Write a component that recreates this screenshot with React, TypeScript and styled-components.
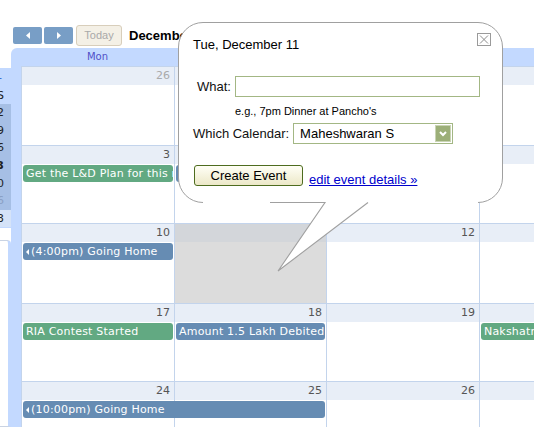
import React from 'react';
import styled, { createGlobalStyle, css } from 'styled-components';

const GlobalStyle = createGlobalStyle`
  html, body {
    margin: 0;
    padding: 0;
    background: #fff;
    overflow: hidden;
  }
  body {
    font-family: 'Liberation Sans', Arial, sans-serif;
  }
`;

const LINE = '#c3d4ec';
const HEAD_BG = '#e8eef7';
const COLS = '153px 152px 153px 152px 153px 152px 152px';
const CAL_FONT = "'DejaVu Sans', Verdana, sans-serif";

const Page = styled.div`
  position: relative;
  width: 534px;
  height: 427px;
  overflow: hidden;
`;

/* ***** toolbar */
const Toolbar = styled.div`
  display: flex;
  align-items: center;
  height: 23px;
  padding: 24px 0 1px 13px;
`;

const NavGroup = styled.div`
  display: flex;
  gap: 2px;
`;

const NavButton = styled.div`
  display: flex;
  align-items: center;
  justify-content: center;
  width: 29px;
  height: 17px;
  border-radius: 2px;
  background: #789ec6;
`;

const TodayButton = styled.div`
  box-sizing: border-box;
  width: 46px;
  height: 21px;
  margin-left: 3px;
  border: 1px solid #d8cebb;
  border-radius: 3px;
  background: #f4f0e6;
  color: #a9a9a9;
  font-size: 11px;
  line-height: 19px;
  text-align: center;
`;

const MonthTitle = styled.div`
  margin-left: 7px;
  font-size: 13px;
  font-weight: bold;
  color: #000;
  white-space: nowrap;
`;

/* ***** side strip */
const Main = styled.div`
  display: flex;
  height: 379px;
`;

const SideStrip = styled.div`
  display: flex;
  flex-direction: column;
  flex-shrink: 0;
  width: 11px;
  padding-top: 20px;
`;

const MiniCal = styled.div`
  display: flex;
  flex-direction: column;
  height: 160px;
  overflow: hidden;
  background: #c3d9ff;
  font-family: ${CAL_FONT};
  font-size: 11px;
`;

interface IMiniRowProps {
  shade?: 'dark' | 'light';
  bold?: boolean;
  faint?: boolean;
}

const MiniRow = styled.div<IMiniRowProps>`
  ${({ shade, bold, faint }) => css`
    display: flex;
    justify-content: flex-end;
    align-items: center;
    height: ${shade ? '17.6px' : '18px'};
    padding-right: 7px;
    white-space: nowrap;
    color: ${faint ? '#8aa0c4' : '#222'};
    font-weight: ${bold ? 'bold' : 'normal'};
    background: ${shade === 'dark' ? '#a6bfe5' : shade === 'light' ? '#d5e3f8' : 'transparent'};
  `}
`;

const MiniSign = styled(MiniRow)`
  color: #3366cc;
  padding-right: 9px;
`;

const SideBox = styled.div`
  flex: 1;
  margin-top: 12px;
  border: 1px solid #c9d3e3;
  border-left: none;
  border-right: 3px solid #c3d9ff;
  border-radius: 0 4px 0 0;
  background: #fff;
`;

/* ***** calendar */
const CalendarFrame = styled.div`
  flex: 1;
  min-width: 0;
  padding-left: 10px;
  overflow: hidden;
  border-top-left-radius: 6px;
  background: #c3d9ff;
  font-family: ${CAL_FONT};
`;

const DayNames = styled.div`
  display: grid;
  grid-template-columns: ${COLS};
  height: 18px;
`;

const DayName = styled.div`
  font-size: 10px;
  line-height: 18px;
  text-align: center;
  color: #5050c8;
`;

const MonthGrid = styled.div`
  background: #fff;
`;

interface IWeekProps {
  height: number;
}

const Week = styled.div<IWeekProps>`
  display: grid;
  grid-template-columns: ${COLS};
  grid-template-rows: 18px 18px 1fr;
  height: ${({ height }) => height}px;
  box-sizing: border-box;
  border-top: 1px solid ${LINE};
`;

interface IDayCellProps {
  col: number;
  selected?: boolean;
}

const DayCell = styled.div<IDayCellProps>`
  ${({ col, selected }) => css`
    grid-row: 1 / -1;
    grid-column: ${col};
    border-left: 1px solid ${LINE};
    background: ${selected
      ? 'linear-gradient(to bottom, #d3d6da 0 18px, #dcdcdc 18px)'
      : `linear-gradient(to bottom, ${HEAD_BG} 0 18px, #fff 18px)`};
  `}
`;

interface IDayNumProps {
  col: number;
  other?: boolean;
}

const DayNum = styled.div<IDayNumProps>`
  grid-row: 1;
  grid-column: ${({ col }) => col};
  padding-right: 4px;
  font-size: 11px;
  line-height: 18px;
  text-align: right;
  color: ${({ other }) => (other ? '#aaa' : '#555')};
`;

interface IEventProps {
  col: number;
  span?: number;
  tone: 'green' | 'blue';
}

const EventBar = styled.div<IEventProps>`
  ${({ col, span = 1, tone }) => css`
    grid-row: 2;
    grid-column: ${col} / span ${span};
    display: flex;
    align-items: center;
    height: 17px;
    margin: 1px 1px 0 2px;
    padding-left: 3px;
    overflow: hidden;
    border-radius: 3px;
    background: ${tone === 'green' ? '#62a982' : '#668cb3'};
    color: #fff;
    font-size: 11px;
    letter-spacing: 0.2px;
    white-space: nowrap;
  `}
`;

const ContinueArrow = styled.svg`
  flex-shrink: 0;
  margin-right: 2px;
`;

/* ***** popup bubble */
const Popup = styled.div`
  position: absolute;
  top: 22px;
  left: 178px;
  box-sizing: border-box;
  width: 325px;
  height: 181px;
  padding: 14px 11px 0 14px;
  border: 1px solid #a0a0a0;
  border-radius: 25px;
  background: #fff;
  font-size: 13px;
  color: #000;
`;

const PopupHead = styled.div`
  display: flex;
  justify-content: space-between;
  align-items: flex-start;
  line-height: 15px;
`;

const CloseBox = styled.div`
  display: flex;
  align-items: center;
  justify-content: center;
  box-sizing: border-box;
  width: 14px;
  height: 13px;
  margin-top: -4px;
  border: 1px solid #9a9a9a;
`;

const FieldRow = styled.div<{ indent: number; top: number }>`
  display: flex;
  align-items: center;
  gap: 4px;
  margin-top: ${({ top }) => top}px;
  padding-left: ${({ indent }) => indent}px;
  color: #111;
`;

const TextInput = styled.div`
  box-sizing: border-box;
  width: 245px;
  height: 21px;
  border: 1px solid #a3b784;
  background: #fff;
`;

const Hint = styled.div`
  margin-top: 8px;
  padding-left: 42px;
  font-size: 11px;
  line-height: 13px;
  color: #000;
`;

const SelectBox = styled.div`
  display: flex;
  align-items: center;
  box-sizing: border-box;
  width: 160px;
  height: 21px;
  padding: 0 1px 0 6px;
  border: 1px solid #a3b784;
  color: #000;
`;

const DropButton = styled.div`
  display: flex;
  align-items: center;
  justify-content: center;
  box-sizing: border-box;
  width: 16px;
  height: 17px;
  margin-left: auto;
  border: 1px solid #c9d4b4;
  background: #9caf78;
`;

const Actions = styled.div`
  display: flex;
  align-items: flex-end;
  gap: 6px;
  margin-top: 21px;
  padding-left: 1px;
`;

const CreateButton = styled.div`
  box-sizing: border-box;
  width: 109px;
  height: 21px;
  border: 1px solid #4e6c1f;
  border-radius: 3px;
  background: linear-gradient(to bottom, #fffff6, #ece8c8);
  font-size: 13px;
  line-height: 19px;
  text-align: center;
  color: #000;
`;

const EditLink = styled.a`
  font-size: 13px;
  line-height: 15px;
  color: #0000cc;
  text-decoration: underline;
  margin-bottom: -1px;
`;

/* bottom edge of the bubble with its pointer (edge pieces only drawn near the pointer) */
const BubbleBottom = styled.svg`
  position: absolute;
  left: 24px;
  top: 178px;
  overflow: visible;
`;

const days = ['Mon', 'Tue', 'Wed', 'Thu', 'Fri', 'Sat', 'Sun'];

interface IEvent {
  col: number;
  span?: number;
  tone: 'green' | 'blue';
  text: string;
  continued?: boolean;
}

interface IWeek {
  height: number;
  days: { n: number; other?: boolean }[];
  selected?: number;
  events: IEvent[];
}

const mk = (start: number, otherUntil = 0) =>
  Array.from({ length: 7 }, (_, i) => {
    const raw = start + i;
    if (otherUntil && raw <= otherUntil) return { n: raw, other: true };
    if (otherUntil) return { n: raw - otherUntil };
    return { n: raw > 31 ? raw - 31 : raw, other: raw > 31 };
  });

const weeks: IWeek[] = [
  { height: 79, days: mk(26, 30), events: [] },
  {
    height: 78,
    days: mk(3),
    events: [
      { col: 1, tone: 'green', text: 'Get the L&D Plan for this month' },
      { col: 2, tone: 'blue', text: '' },
    ],
  },
  {
    height: 80,
    days: mk(10),
    selected: 2,
    events: [{ col: 1, tone: 'blue', text: '(4:00pm) Going Home', continued: true }],
  },
  {
    height: 78,
    days: mk(17),
    events: [
      { col: 1, tone: 'green', text: 'RIA Contest Started' },
      { col: 2, tone: 'blue', text: 'Amount 1.5 Lakh Debited' },
      { col: 4, tone: 'green', text: 'Nakshatra Visit' },
    ],
  },
  {
    height: 80,
    days: mk(24),
    events: [
      { col: 1, span: 2, tone: 'blue', text: '(10:00pm) Going Home', continued: true },
    ],
  },
];

const ArrowLeft = () => (
  <svg width="4" height="7" viewBox="0 0 4 7">
    <polygon points="4,0 0,3.5 4,7" fill="#fff" />
  </svg>
);

const ArrowRight = () => (
  <svg width="4" height="7" viewBox="0 0 4 7">
    <polygon points="0,0 4,3.5 0,7" fill="#fff" />
  </svg>
);

export default function App() {
  return (
    <Page>
      <GlobalStyle />
      <Toolbar>
        <NavGroup>
          <NavButton>
            <ArrowLeft />
          </NavButton>
          <NavButton>
            <ArrowRight />
          </NavButton>
        </NavGroup>
        <TodayButton>Today</TodayButton>
        <MonthTitle>December 2007</MonthTitle>
      </Toolbar>

      <Main>
        <SideStrip>
          <MiniCal>
            <MiniSign>-</MiniSign>
            <MiniRow>S</MiniRow>
            <MiniRow shade="dark">2</MiniRow>
            <MiniRow shade="dark">9</MiniRow>
            <MiniRow shade="dark">16</MiniRow>
            <MiniRow shade="dark" bold>23</MiniRow>
            <MiniRow shade="dark">30</MiniRow>
            <MiniRow shade="dark" faint>6</MiniRow>
            <MiniRow shade="light">13</MiniRow>
          </MiniCal>
          <SideBox />
        </SideStrip>

        <CalendarFrame>
          <DayNames>
            {days.map((d) => (
              <DayName key={d}>{d}</DayName>
            ))}
          </DayNames>
          <MonthGrid>
            {weeks.map((w, wi) => (
              <Week key={wi} height={w.height}>
                {w.days.map((d, i) => (
                  <DayCell key={`c${i}`} col={i + 1} selected={w.selected === i + 1} />
                ))}
                {w.days.map((d, i) => (
                  <DayNum key={`n${i}`} col={i + 1} other={d.other}>
                    {d.n}
                  </DayNum>
                ))}
                {w.events.map((e, ei) => (
                  <EventBar key={`e${ei}`} col={e.col} span={e.span} tone={e.tone}>
                    {e.continued && (
                      <ContinueArrow width="3" height="6" viewBox="0 0 3 6">
                        <polygon points="3,0 0,3 3,6" fill="#fff" />
                      </ContinueArrow>
                    )}
                    {e.text}
                  </EventBar>
                ))}
              </Week>
            ))}
          </MonthGrid>
        </CalendarFrame>
      </Main>

      <Popup>
        <PopupHead>
          <span>Tue, December 11</span>
          <CloseBox>
            <svg width="10" height="9" viewBox="0 0 10 9">
              <path d="M1 0.5 L9 8.5 M9 0.5 L1 8.5" stroke="#8c8c8c" strokeWidth="1" />
            </svg>
          </CloseBox>
        </PopupHead>
        <FieldRow indent={4} top={24}>
          <span>What:</span>
          <TextInput />
        </FieldRow>
        <Hint>e.g., 7pm Dinner at Pancho's</Hint>
        <FieldRow indent={0} top={5}>
          <span>Which Calendar:</span>
          <SelectBox>
            Maheshwaran S
            <DropButton>
              <svg width="8" height="6" viewBox="0 0 8 6">
                <path d="M1 1 L4 4 L7 1" fill="none" stroke="#fff" strokeWidth="2" />
              </svg>
            </DropButton>
          </SelectBox>
        </FieldRow>
        <Actions>
          <CreateButton>Create Event</CreateButton>
          <EditLink href="#">edit event details »</EditLink>
        </Actions>
        <BubbleBottom width="275" height="72" viewBox="0 0 275 72">
          <rect x="0" y="0" width="275" height="3" fill="#fff" />
          <polygon points="122,1.5 75,70 165,1.5" fill="#fff" />
          <path d="M67 1.5 L122 1.5 L75 70 L165 1.5" fill="none" stroke="#a0a0a0" strokeWidth="1.1" />
        </BubbleBottom>
      </Popup>
    </Page>
  );
}
